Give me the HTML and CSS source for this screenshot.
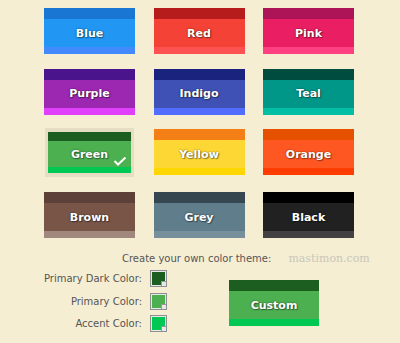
FILE: index.html
```html
<!DOCTYPE html>
<html lang="en">
<head>
    <meta charset="UTF-8" />
    <meta name="viewport" content="width=device-width, initial-scale=1.0" />
    <title>Color Themes</title>
    <link rel="stylesheet" href="styles.css">
</head>
<body>
    <div class="theme-grid">
        <button class="swatch blue"><span class="band-top"></span><span class="band-mid">Blue</span><span class="band-bottom"></span></button>
        <button class="swatch red"><span class="band-top"></span><span class="band-mid">Red</span><span class="band-bottom"></span></button>
        <button class="swatch pink"><span class="band-top"></span><span class="band-mid">Pink</span><span class="band-bottom"></span></button>

        <button class="swatch purple"><span class="band-top"></span><span class="band-mid">Purple</span><span class="band-bottom"></span></button>
        <button class="swatch indigo"><span class="band-top"></span><span class="band-mid">Indigo</span><span class="band-bottom"></span></button>
        <button class="swatch teal"><span class="band-top"></span><span class="band-mid">Teal</span><span class="band-bottom"></span></button>

        <button class="swatch green selected">
            <span class="band-top"></span>
            <span class="band-mid">Green
                <svg class="check" width="14" height="10" viewBox="0 0 14 10" aria-hidden="true">
                    <polyline points="1.5,5 5,8.5 12.5,1.5" fill="none" stroke="#fff" stroke-width="2" />
                </svg>
            </span>
            <span class="band-bottom"></span>
        </button>
        <button class="swatch yellow"><span class="band-top"></span><span class="band-mid">Yellow</span><span class="band-bottom"></span></button>
        <button class="swatch orange"><span class="band-top"></span><span class="band-mid">Orange</span><span class="band-bottom"></span></button>

        <button class="swatch brown"><span class="band-top"></span><span class="band-mid">Brown</span><span class="band-bottom"></span></button>
        <button class="swatch grey"><span class="band-top"></span><span class="band-mid">Grey</span><span class="band-bottom"></span></button>
        <button class="swatch black"><span class="band-top"></span><span class="band-mid">Black</span><span class="band-bottom"></span></button>
    </div>

    <div class="custom-head">
        <span>Create your own color theme:</span>
        <span class="site">mastimon.com</span>
    </div>

    <div class="custom-row">
        <div class="picker-list">
            <label>Primary Dark Color:</label>
            <span class="picker dark"></span>
            <label>Primary Color:</label>
            <span class="picker primary"></span>
            <label>Accent Color:</label>
            <span class="picker accent"></span>
        </div>
        <button class="swatch green custom"><span class="band-top"></span><span class="band-mid">Custom</span><span class="band-bottom"></span></button>
    </div>
</body>
</html>
```

FILE: styles.css
```css
:root {
    --page-bg: #f5eed2;
    --label-color: #555;
}

body {
    margin: 0;
    background: var(--page-bg);
    font-family: "DejaVu Sans", Verdana, sans-serif;
    color: var(--label-color);
}

.theme-grid {
    display: grid;
    grid-template-columns: repeat(3, 91px);
    column-gap: 18.5px;
    row-gap: 14.7px;
    padding: 8px 0 0 44px;
}

.swatch {
    display: flex;
    flex-direction: column;
    width: 91px;
    height: 46px;
    padding: 0;
    border: none;
    font-family: "DejaVu Sans", Verdana, sans-serif;
    font-size: 11px;
    font-weight: bold;
    color: #fff;
    cursor: pointer;
}

.band-top {
    height: 11px;
    background: var(--dark);
}

.band-mid {
    position: relative;
    height: 28px;
    display: flex;
    align-items: center;
    justify-content: center;
    background: var(--main);
    text-shadow: 0 0 2px rgba(0, 0, 0, 0.55), 1px 1px 1px rgba(0, 0, 0, 0.35);
}

.band-bottom {
    flex: 1;
    background: var(--accent);
}

.swatch.selected {
    width: 89px;
    height: 49px;
    padding: 4px 3px;
    margin: -1px 1px 0;
    box-sizing: border-box;
    background: #e6dec3;
}

.swatch.selected .band-top {
    height: 9px;
}

.swatch.selected .band-mid {
    height: 26px;
}

.check {
    position: absolute;
    right: 4px;
    bottom: 1px;
}

.blue   { --dark: #1976d2; --main: #2196f3; --accent: #448aff; }
.red    { --dark: #b71c1c; --main: #f44336; --accent: #ff5252; }
.pink   { --dark: #ad1457; --main: #e91e63; --accent: #ff4081; }
.purple { --dark: #4a148c; --main: #9c27b0; --accent: #e040fb; }
.indigo { --dark: #1a237e; --main: #3f51b5; --accent: #536dfe; }
.teal   { --dark: #004d40; --main: #009688; --accent: #00bfa5; }
.green  { --dark: #1b5e20; --main: #4caf50; --accent: #00c853; }
.yellow { --dark: #f57f17; --main: #fdd835; --accent: #ffd600; }
.orange { --dark: #e65100; --main: #ff5722; --accent: #ff3d00; }
.brown  { --dark: #5d4037; --main: #795548; --accent: #a1887f; }
.grey   { --dark: #37474f; --main: #607d8b; --accent: #78909c; }
.black  { --dark: #000000; --main: #212121; --accent: #424242; }

.custom-head {
    display: flex;
    align-items: baseline;
    gap: 17px;
    margin: 14px 0 0 122px;
    font-size: 10px;
}

.site {
    font-family: "DejaVu Serif", Georgia, serif;
    font-size: 11px;
    color: #c9c6bc;
}

.custom-row {
    display: flex;
    align-items: flex-start;
    margin-top: 5px;
}

.picker-list {
    display: grid;
    grid-template-columns: 142px 17px;
    column-gap: 8px;
    row-gap: 5.5px;
    align-items: center;
    font-size: 10px;
}

.picker-list label {
    text-align: right;
}

.picker {
    position: relative;
    width: 17px;
    height: 17px;
    box-sizing: border-box;
    border: 1px solid #8f8f8f;
    box-shadow: inset 0 0 0 1px #e8e8e8;
    background: var(--fill);
}

.picker::after {
    content: "";
    position: absolute;
    right: 0;
    bottom: 0;
    width: 4px;
    height: 4px;
    background: #e8e8e8;
    border-left: 1px solid #999;
    border-top: 1px solid #999;
}

.picker.dark    { --fill: #1b5e20; }
.picker.primary { --fill: #4caf50; }
.picker.accent  { --fill: #00c853; }

.custom {
    width: 90px;
    margin: 10px 0 0 62px;
}
```
